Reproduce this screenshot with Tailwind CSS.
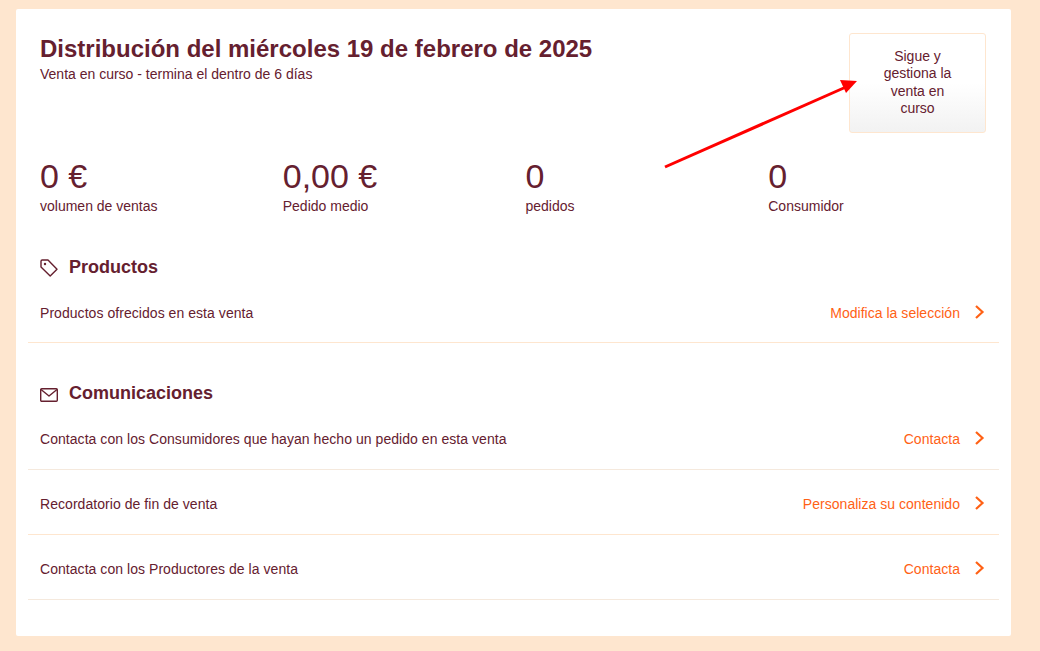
<!DOCTYPE html>
<html lang="es">
  <head>
    <meta charset="UTF-8" />
    <title>Distribución</title>
    <script src="https://cdn.jsdelivr.net/npm/@tailwindcss/browser@4"></script>
  </head>
  <body class="relative h-[651px] overflow-hidden bg-[#fee6cf] pt-[9px] pl-4 font-['Liberation_Sans',Arial,sans-serif] text-[#65202f]">
    <div class="h-[627px] w-[995px] rounded-[2px] bg-white px-3">
      <!-- Header -->
      <div class="flex h-[124px] items-start justify-between pt-[24px] pr-[13px] pl-3">
        <div>
          <h1 class="text-[24px] leading-[32px] font-bold">Distribución del miércoles 19 de febrero de 2025</h1>
          <p class="-mt-px text-[14px] leading-[20px]">Venta en curso - termina el dentro de 6 días</p>
        </div>
        <button class="flex h-[100px] w-[137px] items-center justify-center rounded-[3px] border border-[#fee6cf] bg-gradient-to-b from-white from-50% to-[#f2f2f2] px-6 pb-px text-center text-[14px] leading-[17.5px]">
          Sigue y gestiona la venta en curso
        </button>
      </div>

      <!-- Stats -->
      <div class="grid h-[113px] grid-cols-4 pt-[21px]">
        <div class="px-3">
          <div class="text-[34px] leading-[44px]">0 €</div>
          <div class="-mt-px text-[14px] leading-[18px]">volumen de ventas</div>
        </div>
        <div class="px-3">
          <div class="text-[34px] leading-[44px]">0,00 €</div>
          <div class="-mt-px text-[14px] leading-[18px]">Pedido medio</div>
        </div>
        <div class="px-3">
          <div class="text-[34px] leading-[44px]">0</div>
          <div class="-mt-px text-[14px] leading-[18px]">pedidos</div>
        </div>
        <div class="px-3">
          <div class="text-[34px] leading-[44px]">0</div>
          <div class="-mt-px text-[14px] leading-[18px]">Consumidor</div>
        </div>
      </div>

      <!-- Productos -->
      <div class="flex h-[33px] items-end gap-[11px] px-3">
        <svg class="mb-[2px] h-[18px] w-[18px]" viewBox="0 0 18 18" fill="none" stroke="#65202f" stroke-width="1.4" stroke-linejoin="round">
          <path d="M1 2.2 A1.2 1.2 0 0 1 2.2 1 H8 L17 10.2 L10.2 17 L1 8 Z" />
          <circle cx="5" cy="5" r="1.2" fill="#65202f" stroke="none" />
        </svg>
        <h2 class="text-[18px] leading-[24px] font-bold">Productos</h2>
      </div>
      <div class="flex h-[64px] items-center justify-between border-b border-[#fee6cf] px-3 pt-[5px] text-[14px] tracking-[0.05px]">
        <span>Productos ofrecidos en esta venta</span>
        <a class="flex items-center gap-[15px] tracking-[0.03px] text-[#ff6115]">
          Modifica la selección
          <svg class="mb-[2px] h-[14px] w-[12px]" viewBox="0 0 12 14" fill="none" stroke="#ff6115" stroke-width="2.2"><path d="M1 1 L7.5 7 L1 13" /></svg>
        </a>
      </div>

      <!-- Comunicaciones -->
      <div class="mt-[38px] flex h-[24px] items-end gap-[11px] px-3">
        <svg class="mb-[3px] h-[14px] w-[18px]" viewBox="0 0 18 14" fill="none" stroke="#65202f" stroke-width="1.4" stroke-linejoin="round">
          <rect x="0.7" y="0.7" width="16.6" height="12.6" rx="1" />
          <path d="M1 1.5 L9 8 L17 1.5" />
        </svg>
        <h2 class="text-[18px] leading-[24px] font-bold">Comunicaciones</h2>
      </div>
      <div class="flex h-[65px] items-center justify-between border-b border-[#f5e9dd] px-3 pt-1 text-[14px] tracking-[0.05px]">
        <span>Contacta con los Consumidores que hayan hecho un pedido en esta venta</span>
        <a class="flex items-center gap-[15px] tracking-[0.03px] text-[#ff6115]">
          Contacta
          <svg class="mb-[2px] h-[14px] w-[12px]" viewBox="0 0 12 14" fill="none" stroke="#ff6115" stroke-width="2.2"><path d="M1 1 L7.5 7 L1 13" /></svg>
        </a>
      </div>
      <div class="flex h-[65px] items-center justify-between border-b border-[#fee6cf] px-3 pt-1 text-[14px] tracking-[0.05px]">
        <span>Recordatorio de fin de venta</span>
        <a class="flex items-center gap-[15px] tracking-[0.03px] text-[#ff6115]">
          Personaliza su contenido
          <svg class="mb-[2px] h-[14px] w-[12px]" viewBox="0 0 12 14" fill="none" stroke="#ff6115" stroke-width="2.2"><path d="M1 1 L7.5 7 L1 13" /></svg>
        </a>
      </div>
      <div class="flex h-[65px] items-center justify-between border-b border-[#f5e9dd] px-3 pt-1 text-[14px] tracking-[0.05px]">
        <span>Contacta con los Productores de la venta</span>
        <a class="flex items-center gap-[15px] tracking-[0.03px] text-[#ff6115]">
          Contacta
          <svg class="mb-[2px] h-[14px] w-[12px]" viewBox="0 0 12 14" fill="none" stroke="#ff6115" stroke-width="2.2"><path d="M1 1 L7.5 7 L1 13" /></svg>
        </a>
      </div>
    </div>

    <!-- Red annotation arrow -->
    <svg class="absolute top-0 left-0 h-[651px] w-[1040px]" viewBox="0 0 1040 651" fill="none">
      <path d="M665 167 L846 87" stroke="#ff0000" stroke-width="3" />
      <path d="M840 80 L857 81 L846 93 Z" fill="#ff0000" />
    </svg>
  </body>
</html>
